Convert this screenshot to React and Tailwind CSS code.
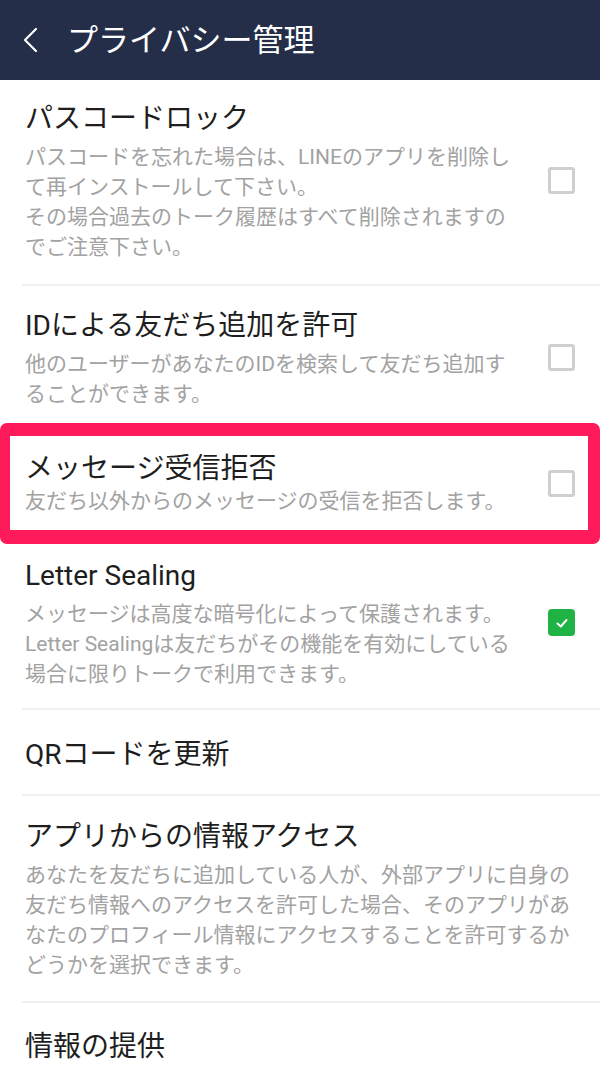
import React from "react";

const font = { fontFamily: '"Roboto", "Noto Sans CJK JP", sans-serif' };

const Checkbox = ({ checked }) =>
  checked ? (
    <div className="w-[27px] h-[27px] rounded-[4px] bg-[#1fb346] flex items-center justify-center shrink-0">
      <svg width="14" height="14" viewBox="0 0 14 14" fill="none">
        <polyline
          points="2.5,7.5 5.8,10.5 11.5,4"
          stroke="white"
          strokeWidth="2"
          strokeLinecap="round"
          strokeLinejoin="round"
        />
      </svg>
    </div>
  ) : (
    <div className="w-[27px] h-[27px] rounded-[3px] border-[3px] border-[#cfcfcf] bg-white shrink-0" />
  );

const Divider = () => (
  <div className="ml-[22px] h-[2px] bg-[#f0f0f0]" />
);

const Item = ({ title, lines, checkbox, pt = "pt-[21px]", pb = "pb-[22px]" }) => (
  <div className={`flex items-center pl-[25px] pr-[25px] ${pt} ${pb}`}>
    <div className="flex-1">
      <div className="text-[28px] leading-[40px] text-[#1e1e1e]">{title}</div>
      {lines && (
        <div className="mt-[3px] text-[21px] leading-[30px] text-[#a2a2a2]">
          {lines.map((l, i) => (
            <div key={i} className="whitespace-nowrap">
              {l}
            </div>
          ))}
        </div>
      )}
    </div>
    {checkbox !== undefined && <Checkbox checked={checkbox} />}
  </div>
);

export default function App() {
  return (
    <div className="w-[600px] h-[1086px] bg-white overflow-hidden" style={font}>
      {/* header */}
      <div className="h-[80px] bg-[#252e49] flex items-center">
        <div className="w-[67px] flex items-center pl-[22px]">
          <svg width="16" height="26" viewBox="0 0 16 26" fill="none">
            <polyline
              points="14,2 3,13 14,24"
              stroke="white"
              strokeWidth="2.2"
              strokeLinecap="round"
              strokeLinejoin="round"
            />
          </svg>
        </div>
        <div className="text-[31px] text-white leading-none">プライバシー管理</div>
      </div>

      <Item
        pt="pt-[19px]"
        title="パスコードロック"
        lines={[
          "パスコードを忘れた場合は、LINEのアプリを削除し",
          "て再インストールして下さい。",
          "その場合過去のトーク履歴はすべて削除されますの",
          "でご注意下さい。",
        ]}
        checkbox={false}
      />
      <Divider />
      <Item
        pt="pt-[20px]"
        pb="pb-[14px]"
        title="IDによる友だち追加を許可"
        lines={[
          "他のユーザーがあなたのIDを検索して友だち追加す",
          "ることができます。",
        ]}
        checkbox={false}
      />

      {/* highlighted row */}
      <div className="border-t-[13px] border-b-[14px] border-l-[10px] border-r-[12px] border-[#fe1a5b] rounded-[7px]">
        <div className="flex items-center pl-[15px] pr-[13px] pt-[15px] pb-[14px]">
          <div className="flex-1">
            <div className="text-[28px] leading-[36px] text-[#1e1e1e]">メッセージ受信拒否</div>
            <div className="-mt-[1px] text-[21px] leading-[30px] text-[#a2a2a2] whitespace-nowrap">
              友だち以外からのメッセージの受信を拒否します。
            </div>
          </div>
          <Checkbox checked={false} />
        </div>
      </div>

      <Item
        pt="pt-[12px]"
        pb="pb-[19px]"
        title="Letter Sealing"
        lines={[
          "メッセージは高度な暗号化によって保護されます。",
          "Letter Sealingは友だちがその機能を有効にしている",
          "場合に限りトークで利用できます。",
        ]}
        checkbox={true}
      />
      <Divider />
      <Item pt="pt-[25px]" pb="pb-[19px]" title="QRコードを更新" />
      <Divider />
      <Item
        pt="pt-[21px]"
        pb="pb-[21px]"
        title="アプリからの情報アクセス"
        lines={[
          "あなたを友だちに追加している人が、外部アプリに自身の",
          "友だち情報へのアクセスを許可した場合、そのアプリがあ",
          "なたのプロフィール情報にアクセスすることを許可するか",
          "どうかを選択できます。",
        ]}
      />
      <Divider />
      <Item pt="pt-[24px]" title="情報の提供" />
    </div>
  );
}
